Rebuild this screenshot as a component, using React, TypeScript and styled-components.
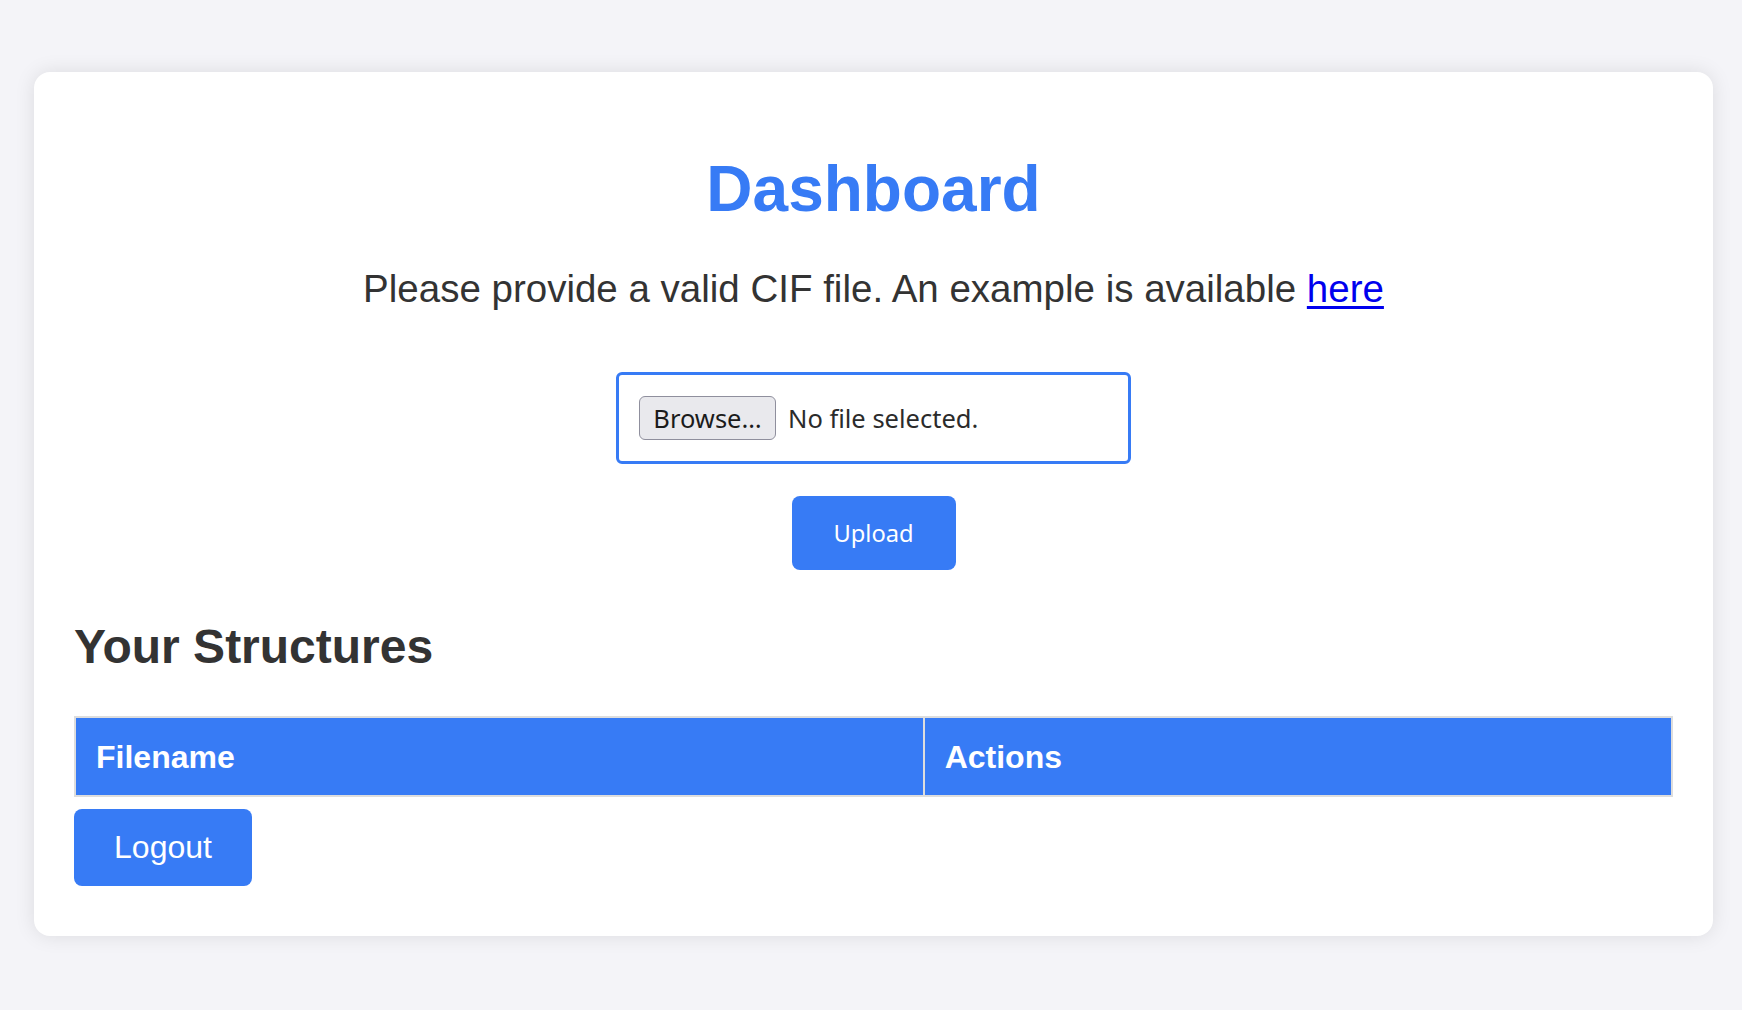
import React from "react";
import styled, { createGlobalStyle } from "styled-components";

const BLUE = "#377bf5";

const GlobalStyle = createGlobalStyle`
  html, body {
    margin: 0;
    padding: 0;
    background: #f4f4f8;
  }
  body {
    font-family: "Liberation Sans", Arial, sans-serif;
    color: #333333;
  }
  * { box-sizing: border-box; }
`;

const Page = styled.div`
  padding: 72px 29px 75px 34px;
`;

const Card = styled.main`
  background: #ffffff;
  border-radius: 16px;
  box-shadow: 0 0 20px rgba(0, 0, 0, 0.1);
  padding: 40px 40px 40px;
`;

const Title = styled.h1`
  margin: 41px 0 42px;
  font-size: 64px;
  line-height: 72px;
  font-weight: 700;
  color: ${BLUE};
  text-align: center;
`;

const Lead = styled.p`
  margin: 0 0 61px;
  font-size: 38.5px;
  line-height: 44px;
  text-align: center;
  color: #333333;

  a {
    color: #0000ee;
    text-decoration: underline;
    text-underline-offset: 4px;
    text-decoration-thickness: 3px;
  }
`;

const UploadForm = styled.form`
  display: flex;
  flex-direction: column;
  align-items: center;
  gap: 32px;
  font-family: "Noto Sans", "DejaVu Sans", sans-serif;
`;

const FileField = styled.label`
  width: 515px;
  height: 92px;
  border: 3px solid ${BLUE};
  border-radius: 6px;
  padding: 0 20px;
  display: flex;
  align-items: center;
  gap: 12px;
  background: #ffffff;
  cursor: pointer;
`;

const BrowseButton = styled.span`
  display: inline-flex;
  align-items: center;
  justify-content: center;
  width: 137px;
  height: 44px;
  background: #e9e9ed;
  border: 1.5px solid #8f8f9d;
  border-radius: 6px;
  font-size: 25.5px;
  color: #1b1b1b;
`;

const FileStatus = styled.span`
  font-size: 25.5px;
  color: #2b2b2b;
`;

const HiddenInput = styled.input`
  display: none;
`;

const PrimaryButton = styled.button<{ $size: "sm" | "lg" }>`
  background: ${BLUE};
  color: #ffffff;
  border: none;
  border-radius: 8px;
  cursor: pointer;
  ${(p) =>
    p.$size === "sm"
      ? `
    width: 164px;
    height: 74px;
    font-family: "Noto Sans", "DejaVu Sans", sans-serif;
    font-size: 23.7px;
  `
      : `
    width: 178px;
    height: 77px;
    font-family: "Liberation Sans", Arial, sans-serif;
    font-size: 32px;
    margin: 12px 0 10px;
  `}
`;

const SectionTitle = styled.h2`
  margin: 50px 0 42px;
  font-size: 48px;
  line-height: 54px;
  font-weight: 700;
  color: #333333;
`;

const Table = styled.table`
  width: 100%;
  border-collapse: separate;
  border-spacing: 0;
`;

const HeadCell = styled.th<{ $first?: boolean }>`
  background: ${BLUE};
  color: #ffffff;
  text-align: left;
  font-size: 32px;
  line-height: 36px;
  font-weight: 700;
  padding: 21px 20px 20px;
  border: 2px solid #dddddd;
  border-left: ${(p) => (p.$first ? "2px solid #dddddd" : "none")};
`;

export default function App() {
  return (
    <>
      <GlobalStyle />
      <Page>
        <Card>
          <Title>Dashboard</Title>
          <Lead>
            Please provide a valid CIF file. An example is available{" "}
            <a href="#example">here</a>
          </Lead>
          <UploadForm onSubmit={(e) => e.preventDefault()}>
            <FileField>
              <BrowseButton>Browse…</BrowseButton>
              <FileStatus>No file selected.</FileStatus>
              <HiddenInput type="file" />
            </FileField>
            <PrimaryButton $size="sm" type="submit">
              Upload
            </PrimaryButton>
          </UploadForm>
          <SectionTitle>Your Structures</SectionTitle>
          <Table>
            <thead>
              <tr>
                <HeadCell $first style={{ width: "53.2%" }}>
                  Filename
                </HeadCell>
                <HeadCell>Actions</HeadCell>
              </tr>
            </thead>
            <tbody />
          </Table>
          <PrimaryButton $size="lg" type="button">
            Logout
          </PrimaryButton>
        </Card>
      </Page>
    </>
  );
}
